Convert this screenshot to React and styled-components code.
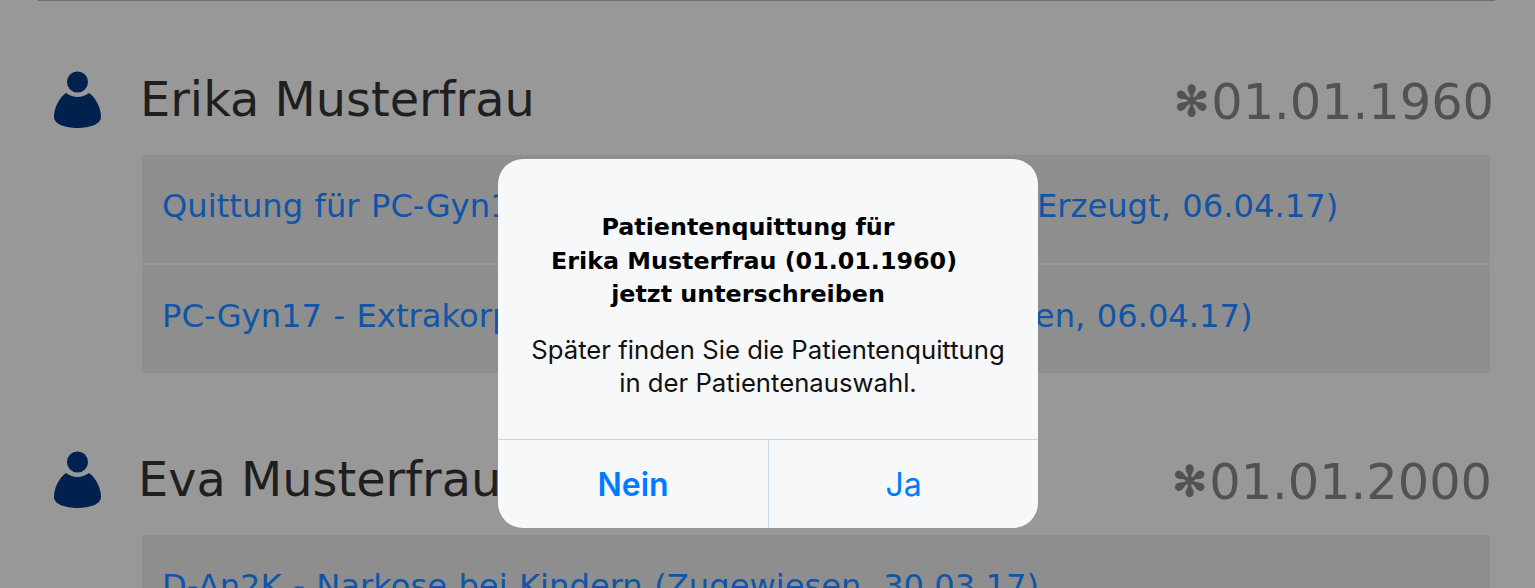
import React from 'react';
import styled, { createGlobalStyle } from 'styled-components';

const GlobalStyle = createGlobalStyle`
  html, body {
    margin: 0;
    padding: 0;
    height: 100%;
    overflow: hidden;
    background: #989898;
  }
`;

const patients = [
  {
    name: 'Erika Musterfrau',
    born: '01.01.1960',
    shift: 0,
    items: [
      'Quittung für PC-Gyn17 - Extrakorporale Befruchtung (Erzeugt, 06.04.17)',
      'PC-Gyn17 - Extrakorporale Befruchtung (Unterschrieben, 06.04.17)',
    ],
  },
  {
    name: 'Eva Musterfrau',
    born: '01.01.2000',
    shift: 2,
    items: ['D-An2K - Narkose bei Kindern (Zugewiesen, 30.03.17)'],
  },
];

const PersonIcon = () => (
  <Avatar viewBox="0 0 48 58">
    <circle cx="23.5" cy="11" r="10.5" />
    <path d="M12 22Q23.5 30 35 22C42 27 47 37 47 46C47 53 36 57 23.5 57C11 57 0 53 0 46C0 37 5 27 12 22Z" />
  </Avatar>
);

const App = () => (
  <>
    <GlobalStyle />
    <Page>
      <TopRule />
      {patients.map((patient) => (
        <Patient key={patient.name}>
          <PatientHeader>
            <PersonIcon />
            <PatientName $shift={patient.shift}>{patient.name}</PatientName>
            <BirthDate $shift={patient.shift}>
              <BirthMark>✻</BirthMark>
              {patient.born}
            </BirthDate>
          </PatientHeader>
          <DocumentList>
            {patient.items.map((item) => (
              <DocumentRow key={item}>
                <DocumentLink>{item}</DocumentLink>
              </DocumentRow>
            ))}
          </DocumentList>
        </Patient>
      ))}
    </Page>
    <Dialog>
      <DialogBody>
        <DialogTitle>
          <TitleLine>Patientenquittung für</TitleLine>
          <TitleLine $wide>Erika Musterfrau (01.01.1960)</TitleLine>
          <TitleLine>jetzt unterschreiben</TitleLine>
        </DialogTitle>
        <DialogText>
          Später finden Sie die Patientenquittung
          <br />
          in der Patientenauswahl.
        </DialogText>
      </DialogBody>
      <DialogActions>
        <DialogButton $primary>Nein</DialogButton>
        <DialogButton>Ja</DialogButton>
      </DialogActions>
    </Dialog>
  </>
);

const Page = styled.div`
  height: 588px;
  padding: 0 40px 0 38px;
  overflow: hidden;
  box-sizing: border-box;
  font-family: "DejaVu Sans", Verdana, sans-serif;
`;

const TopRule = styled.div`
  height: 1px;
  background: #6f6f6f;
`;

const Patient = styled.section`
  height: 380px;
  padding-top: 70px;
  box-sizing: border-box;
`;

const PatientHeader = styled.header`
  display: flex;
  align-items: center;
  height: 84px;
  padding-left: 16px;
`;

const Avatar = styled.svg`
  width: 48px;
  height: 58px;
  margin-bottom: 26px;
  flex: none;
  fill: #00204d;
`;

const PatientName = styled.h2`
  margin: 0 0 27px ${(props) => 38 - props.$shift}px;
  font-size: 47.8px;
  font-weight: 400;
  line-height: 54px;
  color: #1f1f1f;
`;

const BirthDate = styled.div`
  display: flex;
  align-items: center;
  margin: 0 ${(props) => 1 + props.$shift}px 23px auto;
  font-size: 49.4px;
  line-height: 54px;
  color: #525252;
`;

const BirthMark = styled.span`
  font-size: 42px;
  margin-right: 2px;
  -webkit-text-stroke: 1px #525252;
`;

const DocumentList = styled.div`
  margin: 0 5px 0 104px;
`;

const DocumentRow = styled.div`
  display: flex;
  align-items: center;
  height: 108px;
  padding: 0 0 6px 20px;
  box-sizing: border-box;
  background: #8e8e8e;

  & + & {
    margin-top: 2px;
  }
`;

const DocumentLink = styled.a`
  font-size: 32.2px;
  word-spacing: 1.2px;
  color: #1055a8;
  white-space: nowrap;
`;

const Dialog = styled.div`
  position: absolute;
  left: 498px;
  top: 159px;
  width: 540px;
  height: 369px;
  display: flex;
  flex-direction: column;
  background: #f6f8fa;
  border-radius: 25px;
  overflow: hidden;
`;

const DialogBody = styled.div`
  flex: 1;
  padding-top: 52px;
  box-sizing: border-box;
`;

const DialogTitle = styled.div`
  font-family: "DejaVu Sans", Verdana, sans-serif;
  font-size: 23.8px;
  font-weight: 700;
  line-height: 33.5px;
  text-align: center;
  color: #000;
`;

const TitleLine = styled.div`
  padding-right: ${(props) => (props.$wide ? 28 : 40)}px;
`;

const DialogText = styled.div`
  margin-top: 21px;
  font-family: Inter, "Noto Sans", sans-serif;
  font-size: 25.7px;
  line-height: 33px;
  text-align: center;
  color: #111;
`;

const DialogActions = styled.div`
  display: grid;
  grid-template-columns: 271px 1fr;
  height: 88px;
  border-top: 1px solid #d3d6da;
`;

const DialogButton = styled.button`
  padding: 0;
  border: 0;
  background: none;
  font-family: Inter, "Noto Sans", sans-serif;
  font-size: 32px;
  font-weight: ${(props) => (props.$primary ? 600 : 400)};
  color: #007aff;
  border-right: ${(props) => (props.$primary ? '1px solid #c4d8ee' : '0')};
`;

export default App;
